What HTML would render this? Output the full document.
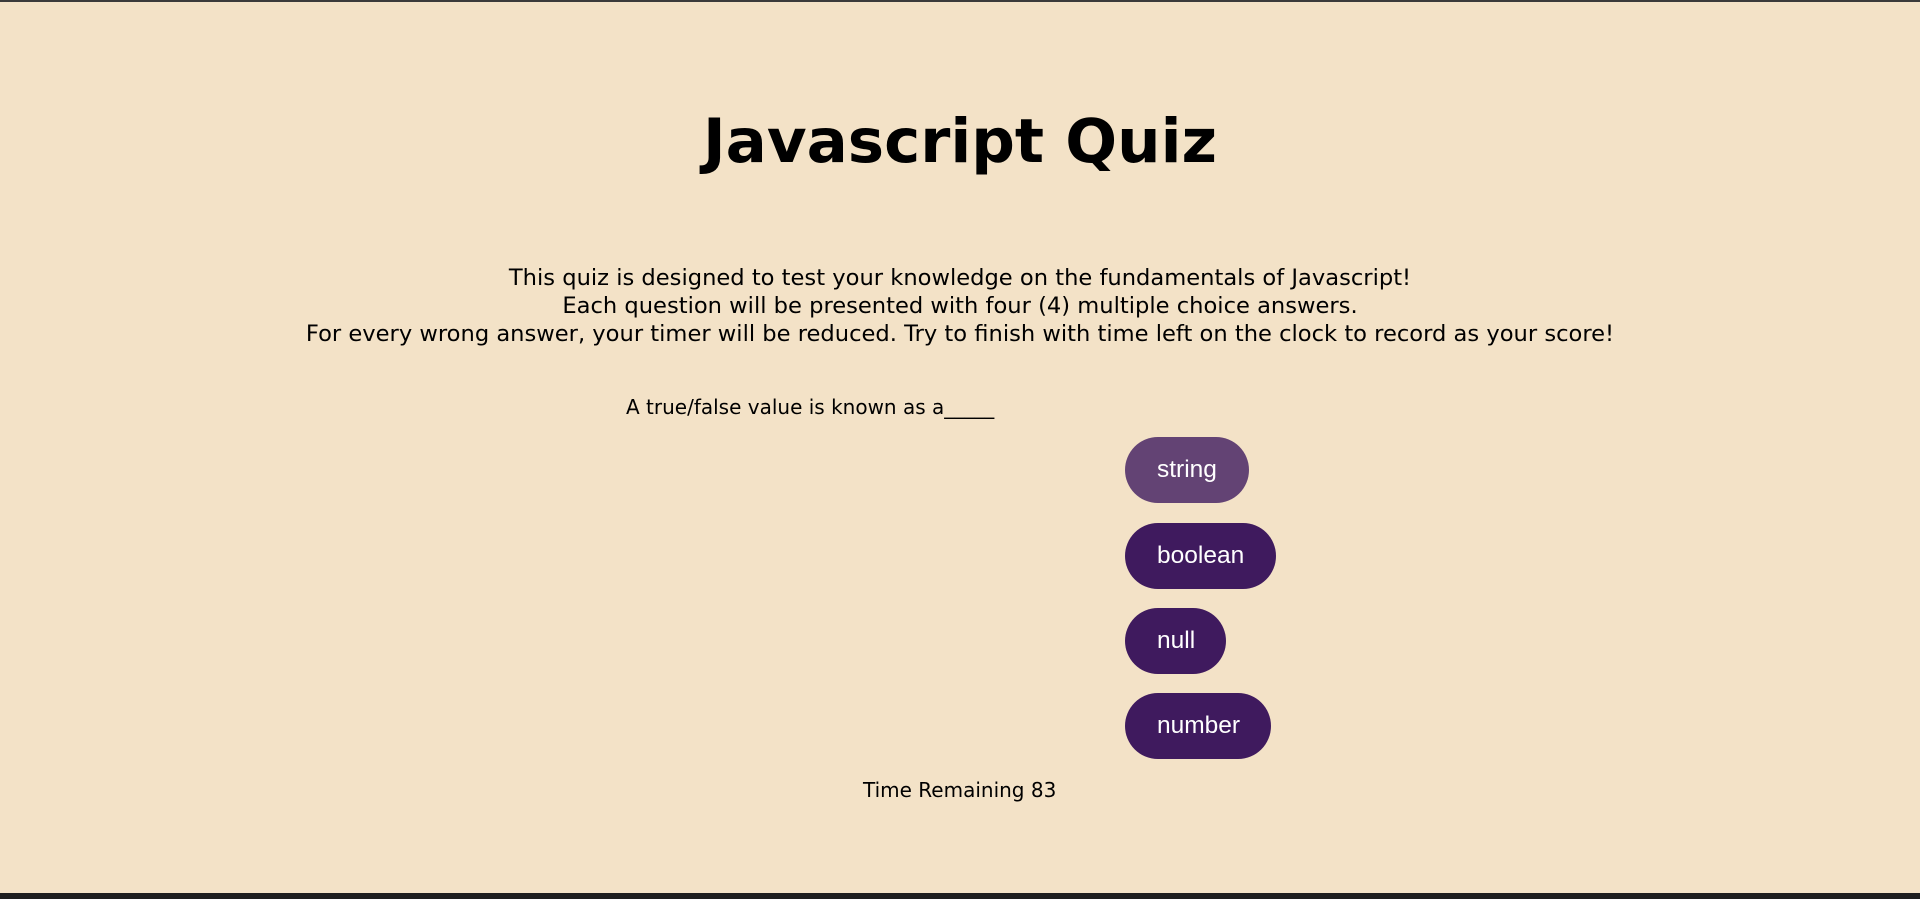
<!DOCTYPE html>
<html><head><meta charset="utf-8"><style>
html,body{margin:0;padding:0}
body{width:1920px;height:899px;background:#f3e2c7;position:relative;overflow:hidden;font-family:"DejaVu Sans",Verdana,sans-serif;color:#000}
.top{position:absolute;left:0;top:0;width:1920px;height:2px;background:#3a3a3a}
.bot{position:absolute;left:0;top:893px;width:1920px;height:6px;background:#1e1e1e}
h1{position:absolute;left:0;width:1920px;top:105px;margin:0;text-align:center;font-size:61px;line-height:74px;font-weight:bold}
.intro{position:absolute;left:0;width:1920px;top:264px;text-align:center;font-size:22.6px;line-height:28px}
.q{position:absolute;left:626px;top:394px;font-size:20px;line-height:26px}
.b{position:absolute;left:1125px;height:66px;line-height:66px;border-radius:33px;background:#3f1a5e;color:#fff;font-family:"Liberation Sans",Arial,sans-serif;font-size:24.5px;padding:0 32px;box-sizing:border-box}
.t{position:absolute;left:863px;top:777px;font-size:20px;line-height:26px}
</style></head><body>
<div class="top"></div>
<h1>Javascript Quiz</h1>
<div class="intro">This quiz is designed to test your knowledge on the fundamentals of Javascript!<br>Each question will be presented with four (4) multiple choice answers.<br>For every wrong answer, your timer will be reduced. Try to finish with time left on the clock to record as your score!</div>
<div class="q">A true/false value is known as a_____</div>
<div class="b" style="top:437px;width:124px;background:#634374">string</div>
<div class="b" style="top:523px;width:151px">boolean</div>
<div class="b" style="top:608px;width:101px">null</div>
<div class="b" style="top:693px;width:146px">number</div>
<div class="t">Time Remaining 83</div>
<div class="bot"></div>
</body></html>
